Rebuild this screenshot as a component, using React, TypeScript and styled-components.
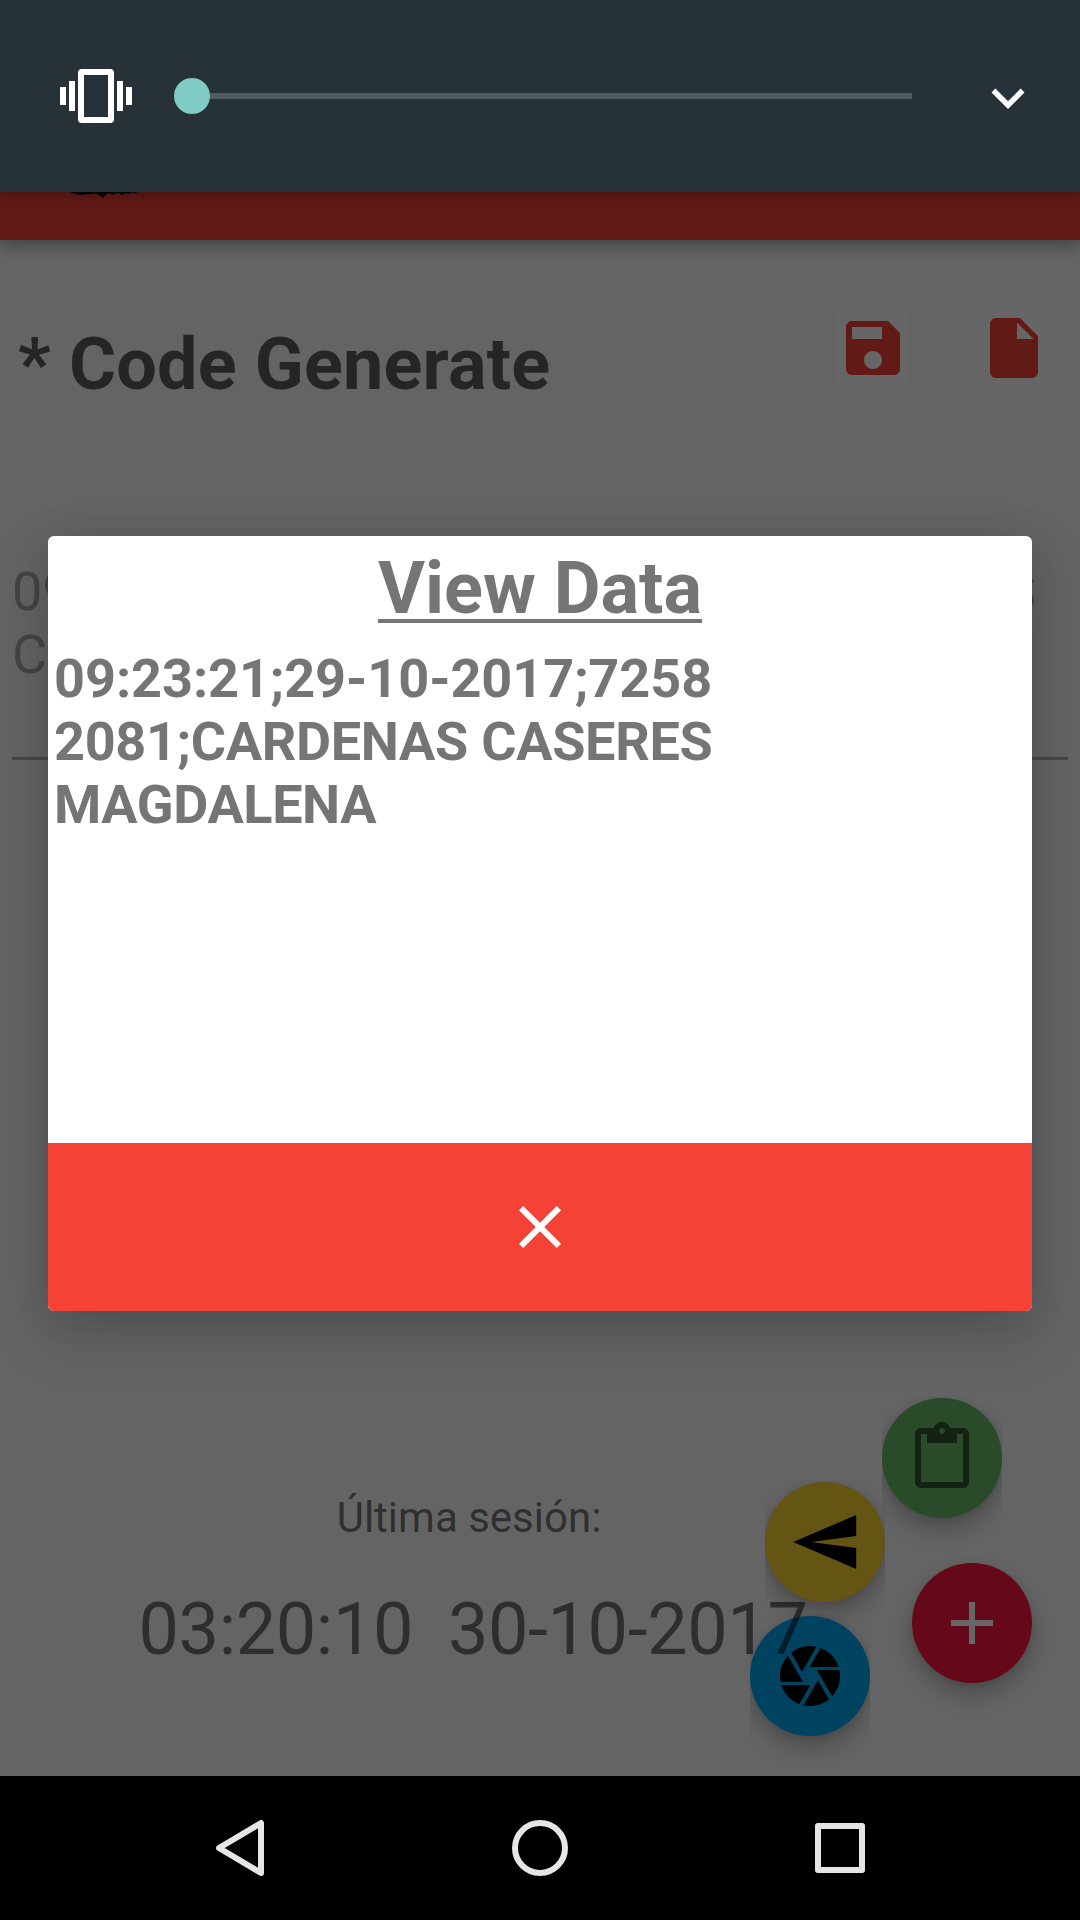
import React from "react";
import styled, { createGlobalStyle } from "styled-components";

const GlobalStyle = createGlobalStyle`
  * { box-sizing: border-box; }
  html, body { margin: 0; background: #000; }
  body { font-family: Roboto, "Noto Sans", sans-serif; }
  button { font: inherit; border: 0; padding: 0; margin: 0; background: none; }
  svg { display: block; }
`;

const Screen = styled.div`
  position: relative;
  width: 1080px;
  height: 1920px;
  overflow: hidden;
  display: flex;
  flex-direction: column;
`;

const Page = styled.main`
  position: relative;
  flex: 1;
  display: flex;
  flex-direction: column;
  background: #fafafa;
`;

const Toolbar = styled.header`
  height: 240px;
  flex: none;
  display: flex;
  align-items: flex-start;
  padding: 192px 0 0 69px;
  background: #f34139;
  box-shadow: 0 5px 16px rgba(0, 0, 0, 0.36);
`;

const TitleRow = styled.section`
  flex: none;
  display: flex;
  align-items: flex-start;
  height: 304px;
  padding: 72px 30px 0 18px;
`;

const Title = styled.h1`
  flex: 1;
  margin: 11px 0 0;
  font-size: 72px;
  line-height: 84px;
  font-weight: 700;
  letter-spacing: 0.16px;
  color: #5e5e5e;
`;

const Actions = styled.div`
  display: flex;
  gap: 69px;
`;

const ActionButton = styled.button`
  width: 72px;
  height: 72px;
  color: #f34139;
  background: #fefefe;
`;

const Field = styled.p`
  flex: none;
  height: 216px;
  margin: 0 12px;
  padding-top: 16px;
  font-size: 54px;
  line-height: 63px;
  color: #acacac;
  border-bottom: 3px solid #b4b4b4;
  white-space: pre;
`;

const FieldLine = styled.span`
  display: flex;
  justify-content: space-between;
  padding-right: 32px;
`;

const Session = styled.section`
  position: relative;
  z-index: 2;
  width: 938px;
  margin-top: auto;
  padding-bottom: 104px;
  display: flex;
  flex-direction: column;
  align-items: center;
  color: rgba(0, 0, 0, 0.54);
`;

const SessionLabel = styled.div`
  font-size: 42px;
  line-height: 49px;
`;

const SessionTime = styled.div`
  margin-top: 46px;
  padding-left: 8px;
  font-size: 72px;
  line-height: 84px;
  letter-spacing: -0.4px;
  white-space: pre;
`;

const Fab = styled.button<{ $x: number; $y: number; $color: string; $clip?: boolean }>`
  position: absolute;
  left: ${(p) => p.$x}px;
  top: ${(p) => p.$y}px;
  width: 120px;
  height: 120px;
  border-radius: 50%;
  display: flex;
  align-items: center;
  justify-content: center;
  background: ${(p) => p.$color};
  box-shadow: 0 12px 24px rgba(0, 0, 0, 0.24), 0 2px 8px rgba(0, 0, 0, 0.1);
  clip-path: ${(p) => (p.$clip ? "inset(-2px 0 -40px 0)" : "none")};
`;

const Scrim = styled.div`
  position: absolute;
  z-index: 5;
  inset: 0 0 144px;
  background: rgba(0, 0, 0, 0.6);
`;

const Dialog = styled.section`
  position: absolute;
  z-index: 6;
  left: 48px;
  top: 536px;
  width: 984px;
  height: 775px;
  display: flex;
  flex-direction: column;
  overflow: hidden;
  border-radius: 6px;
  background: #fff;
  color: #757575;
  box-shadow: 0 24px 60px rgba(0, 0, 0, 0.18), 0 0 44px rgba(0, 0, 0, 0.08);
`;

const DialogTitle = styled.h2`
  margin: 11px 0 0;
  text-align: center;
  font-size: 72px;
  line-height: 84px;
  font-weight: 700;
  text-decoration: underline;
  text-decoration-thickness: 4px;
  text-underline-offset: 6px;
  text-decoration-skip-ink: none;
`;

const DialogBody = styled.div`
  flex: 1;
  display: flex;
  flex-direction: column;
  padding: 16px 6px 0;
  font-size: 54px;
  line-height: 63px;
  font-weight: 700;
`;

const DataLine = styled.span<{ $tracking: number }>`
  letter-spacing: ${(p) => p.$tracking}px;
`;

const DialogClose = styled.button`
  height: 168px;
  display: flex;
  align-items: center;
  justify-content: center;
  background: #f44336;
  color: #fff;
`;

const VolumePanel = styled.aside`
  position: absolute;
  z-index: 10;
  inset: 0 0 auto;
  height: 192px;
  display: flex;
  align-items: center;
  padding: 0 39px 0 60px;
  background: #263238;
  color: #fff;
  box-shadow: 0 3px 12px rgba(0, 0, 0, 0.3);
`;

const Slider = styled.div`
  display: flex;
  align-items: center;
  width: 738px;
  margin: 0 63px 0 42px;
`;

const Thumb = styled.div`
  width: 36px;
  height: 36px;
  border-radius: 50%;
  background: #80cbc4;
`;

const Track = styled.div`
  flex: 1;
  height: 6px;
  background: #515d63;
`;

const ExpandButton = styled.button`
  padding-top: 3px;
  color: #fff;
`;

const NavBar = styled.nav`
  height: 144px;
  flex: none;
  display: flex;
  align-items: center;
  justify-content: center;
  gap: 228px;
  background: #000;
  color: #e6e6e6;
`;

function Icon({ d, size = 72, flip = false }: { d: string; size?: number; flip?: boolean }) {
  return (
    <svg width={size} height={size} viewBox="0 0 24 24" fill="currentColor">
      <path d={d} fillRule="evenodd" transform={flip ? "matrix(-1 0 0 1 24.4 0)" : undefined} />
    </svg>
  );
}

const icons = {
  vibrate:
    "M0 15h2V9H0zM3 17h2V7H3zM22 9v6h2V9zM19 17h2V7h-2zM16.8 3H7.2C6.5 3 6 3.5 6 4.2v15.6c0 .7.5 1.2 1.2 1.2h9.6c.7 0 1.2-.5 1.2-1.2V4.2c0-.7-.5-1.2-1.2-1.2zM16 19H8V5h8z",
  expand: "M16.59 8.59L12 13.17 7.41 8.59 6 10l6 6 6-6z",
  save: "M17 3H5c-1.11 0-2 .9-2 2v14c0 1.1.89 2 2 2h14c1.1 0 2-.9 2-2V7l-4-4zM12 19c-1.66 0-3-1.34-3-3s1.34-3 3-3 3 1.34 3 3-1.34 3-3 3zM15 9H5V5h10z",
  file: "M6 2c-1.1 0-1.99.9-1.99 2L4 20c0 1.1.89 2 1.99 2H18c1.1 0 2-.9 2-2V8l-6-6H6zM13 9V3.5L18.5 9z",
  close:
    "M19 6.41L17.59 5 12 10.59 6.41 5 5 6.41 10.59 12 5 17.59 6.41 19 12 13.41 17.59 19 19 17.59 13.41 12z",
  paste:
    "M19 2h-4.18C14.4.84 13.3 0 12 0c-1.3 0-2.4.84-2.82 2H5c-1.1 0-2 .9-2 2v16c0 1.1.9 2 2 2h14c1.1 0 2-.9 2-2V4c0-1.1-.9-2-2-2zm-7 0c.55 0 1 .45 1 1s-.45 1-1 1-1-.45-1-1 .45-1 1-1zm7 18H5V4h2v3h10V4h2v16z",
  send: "M2.01 21L23 12 2.01 3 2 10l15 2-15 2z",
  camera:
    "M9.4 10.5l4.77-8.26C13.47 2.09 12.75 2 12 2c-2.4 0-4.6.85-6.32 2.25l3.66 6.35.06-.1zM21.54 9c-.92-2.92-3.15-5.26-6-6.34L11.88 9h9.66zm.26 1h-7.49l.29.5 4.76 8.25C21 16.97 22 14.61 22 12c0-.69-.07-1.35-.2-2zM8.54 12l-3.9-6.75C3.01 7.03 2 9.39 2 12c0 .69.07 1.35.2 2h7.49l-1.15-2zm-6.08 3c.92 2.92 3.15 5.26 6 6.34L12.12 15H2.46zm11.27 0l-3.9 6.76c.7.15 1.42.24 2.17.24 2.4 0 4.6-.85 6.32-2.25l-3.66-6.35-.93 1.6z",
  add: "M19 13h-6v6h-2v-6H5v-2h6V5h2v6h6v2z",
};

const dataLines = [
  { text: "09:23:21;29-10-2017;7258", tracking: -0.04 },
  { text: "2081;CARDENAS CASERES", tracking: -0.3 },
  { text: "MAGDALENA", tracking: -0.38 },
];

export default function App() {
  return (
    <>
      <GlobalStyle />
      <Screen>
        <Page>
          <Toolbar>
            <svg width="70" height="8" viewBox="0 0 70 8" fill="#0c1a10">
              <path d="M0 0h69l-3 1.5-3-1-3 1.5-3-1-4 2-4-2-5 1.5-5-1-3 2-2 2.5-4-3-3-1.5-4 .5-6 .5-5 .5-6-1z" />
            </svg>
          </Toolbar>
          <TitleRow>
            <Title>* Code Generate</Title>
            <Actions>
              <ActionButton aria-label="Save">
                <Icon d={icons.save} />
              </ActionButton>
              <ActionButton aria-label="New file">
                <Icon d={icons.file} />
              </ActionButton>
            </Actions>
          </TitleRow>
          <Field>
            <FieldLine>
              <span>09</span>
              <span>S</span>
            </FieldLine>
            <FieldLine>C</FieldLine>
          </Field>
          <Session>
            <SessionLabel>Última sesión:</SessionLabel>
            <SessionTime>{"03:20:10  30-10-2017"}</SessionTime>
          </Session>
          <Fab $x={882} $y={1398} $color="#69bb69" $clip aria-label="Clipboard">
            <svg width="72" height="72" viewBox="0 0 24 24" fill="rgba(0,0,0,.54)">
              <path fillRule="evenodd" d={icons.paste} />
            </svg>
          </Fab>
          <Fab $x={765} $y={1482} $color="#f9d432" $clip aria-label="Send">
            <Icon d={icons.send} flip />
          </Fab>
          <Fab $x={750} $y={1616} $color="#02a8f0" $clip aria-label="Camera">
            <Icon d={icons.camera} />
          </Fab>
          <Fab $x={912} $y={1563} $color="#fc153f" aria-label="Add">
            <svg width="72" height="72" viewBox="0 0 24 24" fill="#fff">
              <path d={icons.add} />
            </svg>
          </Fab>
        </Page>
        <NavBar>
          <svg width="72" height="72" viewBox="0 0 72 72" fill="none" stroke="currentColor" strokeWidth="6" strokeLinejoin="round">
            <path d="M57 11v50L15 36z" />
          </svg>
          <svg width="72" height="72" viewBox="0 0 72 72" fill="none" stroke="currentColor" strokeWidth="6">
            <circle cx="36" cy="36" r="25" />
          </svg>
          <svg width="72" height="72" viewBox="0 0 72 72" fill="none" stroke="currentColor" strokeWidth="6" strokeLinejoin="round">
            <rect x="14" y="14" width="44" height="44" />
          </svg>
        </NavBar>
        <Scrim />
        <Dialog role="dialog">
          <DialogTitle>View Data</DialogTitle>
          <DialogBody>
            {dataLines.map((line) => (
              <DataLine key={line.text} $tracking={line.tracking}>
                {line.text}
              </DataLine>
            ))}
          </DialogBody>
          <DialogClose aria-label="Close">
            <Icon d={icons.close} />
          </DialogClose>
        </Dialog>
        <VolumePanel>
          <Icon d={icons.vibrate} />
          <Slider>
            <Thumb />
            <Track />
          </Slider>
          <ExpandButton aria-label="Expand">
            <Icon d={icons.expand} size={66} />
          </ExpandButton>
        </VolumePanel>
      </Screen>
    </>
  );
}
